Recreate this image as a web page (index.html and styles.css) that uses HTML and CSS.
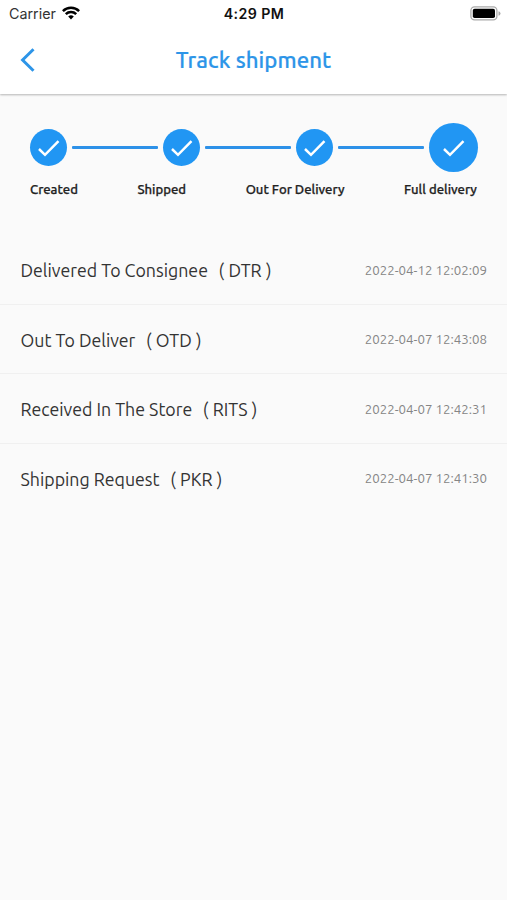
FILE: index.html
```html
<!DOCTYPE html>
<html lang="en">
<head>
<meta charset="utf-8">
<title>Track shipment</title>
<link rel="stylesheet" href="styles.css">
</head>
<body>
<header class="top">
  <div class="status">
    <div class="carrier"><span>Carrier</span>
      <svg width="18" height="14" viewBox="0 0 18 14" fill="none" stroke="#000" stroke-width="2.5"><path d="M.9 5.1a11.5 11.5 0 0 1 16.2 0M3.8 8.2a7.4 7.4 0 0 1 10.4 0"/><path d="M9 13.4 6.2 10.5a4 4 0 0 1 5.6 0z" fill="#000" stroke="none"/></svg>
    </div>
    <div class="clock">4:29 PM</div>
    <svg class="battery" width="31" height="15" viewBox="0 0 31 15"><rect x=".9" y=".9" width="26" height="13" rx="3.6" fill="#fff" stroke="#aaa" stroke-width="1.3"/><rect x="2.8" y="2.8" width="22.2" height="9.2" rx="1.8"/><path d="M28.5 5.2q2 .6 2 2.3t-2 2.3z" fill="#aaa"/></svg>
  </div>
  <div class="nav">
    <svg class="back" width="16" height="26" viewBox="0 0 16 26" fill="none" stroke="#2d95e8" stroke-width="3"><path d="M13.5 2.3 2.6 13l10.9 10.7"/></svg>
    <h1>Track shipment</h1>
  </div>
</header>
<main>
  <section class="steps">
    <div class="dot"><svg viewBox="0 0 24 18"><path d="M2 10l6 5.8L21.5 2.2"/></svg></div>
    <i class="line"></i>
    <div class="dot"><svg viewBox="0 0 24 18"><path d="M2 10l6 5.8L21.5 2.2"/></svg></div>
    <i class="line"></i>
    <div class="dot"><svg viewBox="0 0 24 18"><path d="M2 10l6 5.8L21.5 2.2"/></svg></div>
    <i class="line"></i>
    <div class="dot current"><svg viewBox="0 0 24 18"><path d="M2 10l6 5.8L21.5 2.2"/></svg></div>
  </section>
  <div class="labels"><span>Created</span><span>Shipped</span><span>Out For Delivery</span><span>Full delivery</span></div>
  <ul class="events">
    <li><span>Delivered To Consignee</span><span class="code"><b>(</b><span>DTR</span><b>)</b></span><time>2022-04-12 12:02:09</time></li>
    <li><span>Out To Deliver</span><span class="code"><b>(</b><span>OTD</span><b>)</b></span><time>2022-04-07 12:43:08</time></li>
    <li><span>Received In The Store</span><span class="code"><b>(</b><span>RITS</span><b>)</b></span><time>2022-04-07 12:42:31</time></li>
    <li><span>Shipping Request</span><span class="code"><b>(</b><span>PKR</span><b>)</b></span><time>2022-04-07 12:41:30</time></li>
  </ul>
</main>
</body>
</html>
```
FILE: styles.css
```css
* { box-sizing: border-box; }
body { margin: 0; min-height: 900px; background: #fafafa; color: #333; font-family: "Ubuntu", "Noto Sans", sans-serif; }
.top { height: 94px; background: #fff; box-shadow: 0 1px 2px rgba(0,0,0,.28); }
.status { height: 27px; display: grid; grid-template-columns: 1fr auto 1fr; align-items: center; padding: 0 6px 0 9px; font-family: Inter, sans-serif; color: #111; }
.carrier { display: flex; align-items: center; gap: 6px; font-size: 14.3px; color: #333; }
.carrier svg { margin-top: -2px; }
.clock { font-size: 14.2px; font-weight: 600; letter-spacing: .4px; margin-right: 2px; }
.battery { justify-self: end; }
.nav { height: 66px; display: grid; grid-template-columns: 40px 1fr 40px; align-items: center; padding: 0 20px; }
h1 { margin: 0; text-align: center; font-size: 22.2px; letter-spacing: .05px; line-height: 30px; font-weight: 500; color: #2d95e8; -webkit-text-stroke: .2px #2d95e8; white-space: nowrap; }
.steps { display: flex; align-items: center; gap: 5px; height: 49px; margin: 29px 29px 0 30px; }
.dot { width: 37px; height: 37px; border-radius: 50%; background: #2196f3; display: grid; place-items: center; flex: none; }
.dot.current { width: 49px; height: 49px; }
.dot svg { width: 24px; height: 18px; fill: none; stroke: #fff; stroke-width: 2.5; }
.line { flex: 1; height: 3px; border-radius: 1px; background: #2d91e8; }
.labels { display: flex; justify-content: space-between; height: 20px; line-height: 20px; margin: 7px 30px 0; font-size: 13.1px; font-weight: 500; color: #222; -webkit-text-stroke: .25px #222; white-space: nowrap; }
.events { list-style: none; margin: 36px 0 0; padding: 0; }
li { height: 69.5px; display: flex; align-items: center; padding: 2px 20px 0 20.5px; border-bottom: 1px solid #f0f0f0; font-size: 17.75px; white-space: nowrap; }
li:last-child { border: 0; padding-top: 1px; }
.code { display: flex; gap: 4.3px; margin-left: 10.6px; }
.code b { font-weight: 400; }
time { margin-left: auto; font-size: 13.3px; color: #858585; }
```
